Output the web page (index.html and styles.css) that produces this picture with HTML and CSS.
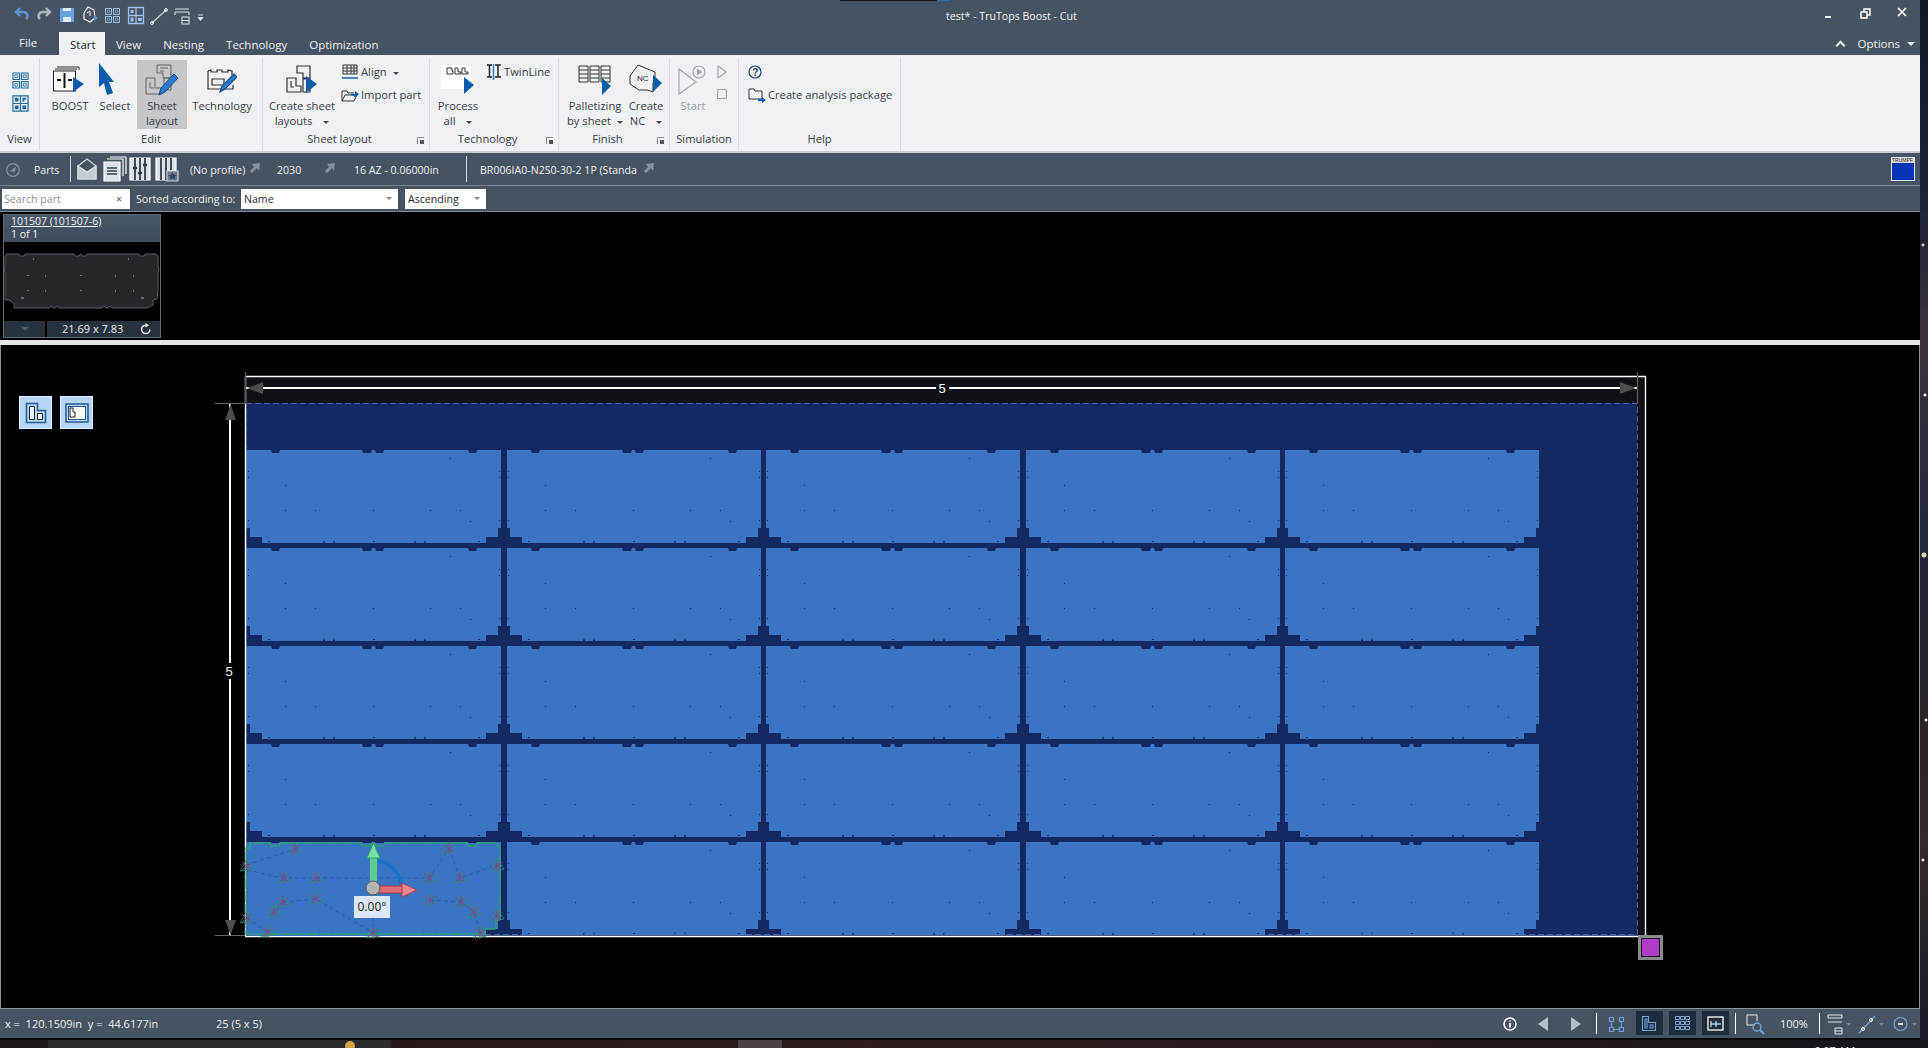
FILE: index.html
```html
<!DOCTYPE html>
<html lang="en">
<head>
  <meta charset="UTF-8">
  <title>test* - TruTops Boost - Cut</title>
  <link rel="stylesheet" href="styles.css">
</head>
<body>
  <svg width="0" height="0" class="defs">
    <defs>
      <g id="part">
        <path d="M0 0H24l1 3h7l1-3H115l1 3h8l1-3h3l1 3h7l1-3H221l1 3h7l1-3H254V78H251V87H239V93H179l-1-3-1 3h-8l-1-3-1 3H88l-1-3-1 3h-8l-1-3-1 3H15V87H3V78H0Z" fill="#3a75c4"/>
        <path d="M203 8h1v1h-1ZM1 21h1v1H1ZM1 27h1v1H1ZM252 21h1v1h-1ZM252 27h1v1h-1ZM38 35h1v1h-1ZM38 60h1v1h-1ZM68 60h1v1h-1ZM126 60h1v1h-1ZM183 60h1v1h-1ZM213 60h1v1h-1ZM223 71h1v1h-1ZM1 70h1v1H1ZM252 70h1v1h-1ZM21 91h2v1h-2ZM126 91h2v1h-2ZM231 91h2v1h-2Z" fill="#142861"/>
      </g>
      <g id="mark">
        <path d="M-5-4L5 4M5-4L-5 4M0-6V6" stroke="#824a78" stroke-width="1"/>
        <path d="M-7 5L0-7 7 3Z" stroke="#2b8f78" stroke-width=".8" fill="none"/>
      </g>
      <path id="ne" d="M0 8L2 10 7 5 9 8 10 0 2 1 4 4Z" fill="#8492a0"/>
    </defs>
  </svg>

  <div class="window">
    <header class="titlebar">
      <i class="sliver"></i>
      <div class="quick">
        <svg width="210" height="24" viewBox="0 0 210 24" fill="none">
          <path d="M17 9H23a4 4 0 0 1 3 7M20 5l-4 4 4 4" stroke="#5b93d3" stroke-width="2.400"/>
          <path d="M49 9H43a4 4 0 0 0-3 7M46 5l4 4-4 4" stroke="#aeb6c0" stroke-width="2.400"/>
          <path d="M60 5H74V19H60Z" fill="#68a2e6"/><rect x="63" y="14" width="8" height="5" fill="#dfe8f2"/><rect x="63" y="5" width="8" height="3" fill="#dfe8f2"/>
          <path d="M84 10l4-6 6 3 1 8-5 4-6-3Z" stroke="#fff" stroke-width="1.100"/><path d="M94 12l4 3-4 3Z" fill="#5b93d3"/><path d="M87 10l3-2v5" stroke="#fff"/>
          <path d="M105.500 5.500h6v6h-6ZM113.500 5.500h6v6h-6ZM105.500 13.500h6v6h-6ZM113.500 13.500h6v6h-6Z" stroke="#9fc2ea"/><path d="M107.500 7.500h2v2h-2ZM115.500 7.500h2v2h-2ZM107.500 15.500h2v2h-2ZM115.500 15.500h2v2h-2Z" stroke="#9fc2ea" stroke-width=".7"/>
          <path d="M128.500 4.500h15v16h-15ZM128.500 12.500h15M136 4.500v16" stroke="#9fc2ea" stroke-width="1.300"/><path d="M130.500 7h3v3h-3ZM138 15h4v3h-4ZM130.500 14.500h3v4h-3Z" fill="#9fc2ea"/>
          <path d="M152 20l14-13" stroke="#cfd6dd" stroke-width="1.100"/><circle cx="152" cy="20" r="1.400" stroke="#fff"/><circle cx="166" cy="7" r="1.400" stroke="#fff"/>
          <path d="M175 6h14M175 9h14M175 9v3M189 9v3M182 14h7v7h-7ZM182 17.500h7" stroke="#dfe4ea" stroke-width="1.100"/>
          <path d="M198 12h5M198 14.500h5l-2.500 3Z" fill="#e5e8ec" stroke="#e5e8ec" stroke-width=".8"/>
        </svg>
      </div>
      <div class="title">test* - TruTops Boost - Cut</div>
      <div class="winbtns">
        <svg width="90" height="20" viewBox="0 0 90 20" fill="none" stroke="#fff">
          <path d="M2 14h6" stroke-width="2"/>
          <path d="M38 9h6v6h-6ZM41 9V6h6v6h-3" stroke-width="1.500"/>
          <path d="M75 5l8 8M83 5l-8 8" stroke-width="1.700"/>
        </svg>
      </div>
    </header>

    <nav class="tabs">
      <span class="tab file">File</span>
      <span class="tab active">Start</span>
      <span class="tab">View</span>
      <span class="tab">Nesting</span>
      <span class="tab">Technology</span>
      <span class="tab">Optimization</span>
      <span class="spacer"></span>
      <i class="chevron"></i>
      <span class="options">Options <i class="caret-w"></i></span>
    </nav>

    <section class="ribbon">
      <div class="group g-view">
        <div class="group-body stacked-icons">
          <svg width="17" height="17" viewBox="0 0 18 18" fill="none" stroke="#1e6f9b" stroke-width="1.200"><path d="M1 1h7v7H1ZM10 1h7v7h-7ZM1 10h7v7H1ZM10 10h7v7h-7Z"/><path d="M3 3h3v3H3ZM12 3h3v3h-3ZM3 12h3v3H3ZM12 12h3v3h-3Z" stroke-width=".9"/></svg>
          <svg width="17" height="17" viewBox="0 0 18 18" fill="none" stroke="#1e6f9b" stroke-width="1.300"><path d="M1 1h16v16H1ZM1 9h16M9 1v16"/><path d="M3 3h4v4H3ZM11 11h4v4h-4ZM3 11h4v4H3Z" fill="#1e6f9b" stroke="none"/><path d="M11 3h4v2h-2v2h-2Z" fill="#1e6f9b" stroke="none"/></svg>
        </div>
        <div class="group-label">View</div>
      </div>

      <div class="group g-edit">
        <div class="group-body">
          <div class="big b-boost">
            <svg class="big-icon" width="34" height="28" viewBox="0 0 34 28" fill="none">
              <path d="M4 1h22v3M2 3h22" stroke="#333"/><rect x=".5" y="5" width="22" height="20" fill="#fff" stroke="#222"/>
              <path d="M4 14h4M15 14h4" stroke="#111" stroke-width="2"/><path d="M11.500 7v15" stroke="#111" stroke-width="2"/>
              <path d="M20 11l11 7-11 8Z" fill="#0b5cad"/>
            </svg>
            <span>BOOST</span>
          </div>
          <div class="big b-select">
            <svg class="big-icon" width="22" height="34" viewBox="0 0 22 34"><path d="M2 0L17 19 12 19 16 30 10 32 7 20 2 24Z" fill="#0b5cad"/></svg>
            <span>Select</span>
          </div>
          <div class="big b-sheet selected">
            <svg class="big-icon" width="34" height="32" viewBox="0 0 34 32" fill="none" stroke="#666">
              <path d="M12 1h14v13H18V9h-6ZM1 14h9v10h6v6H1ZM5 18v6h4M19 14h7v12h-7Z"/>
              <path d="M15 4h8M15 7h4" stroke-width="1.200"/>
              <path d="M14 31l2-7 13-14 4 4-13 14Z" fill="#2a7bd0" stroke="#174a7f"/>
            </svg>
            <span>Sheet<br>layout</span>
          </div>
          <div class="big b-tech">
            <svg class="big-icon" width="30" height="26" viewBox="0 0 30 26" fill="none" stroke="#333" stroke-width="1.200">
              <path d="M1 4l3-1v2h6V3h5v2h6V3l4 1v6M26 18v4H1V4"/>
              <path d="M5 12h12v6H5Z"/>
              <path d="M13 25l2-6 12-12 3 3-12 12Z" fill="#2a7bd0" stroke="#174a7f"/>
            </svg>
            <span>Technology</span>
          </div>
        </div>
        <div class="group-label">Edit</div>
      </div>

      <div class="group g-sheet">
        <div class="group-body">
          <div class="big b-create">
            <svg class="big-icon" width="32" height="30" viewBox="0 0 32 30" fill="none" stroke="#333" stroke-width="1.200">
              <path d="M11 1h13v12h-7V8h-6ZM1 13h9v8h5v6H1ZM5 16v6h3M17 14h7v13h-7Z"/>
              <path d="M20 11l11 8-11 9Z" fill="#0b5cad" stroke="none"/>
            </svg>
            <span>Create sheet<br>layouts <i class="caret"></i></span>
          </div>
          <div class="small-col">
            <div class="small-item">
              <svg width="18" height="16" viewBox="0 0 18 16" fill="none" stroke="#333"><path d="M2 1h14v9H2ZM2 4h14M2 7h14M6 1v9M10 1v9M13 1v9"/><path d="M1 14h16" stroke="#0b5cad" stroke-width="1.500"/></svg>
              <span>Align <i class="caret"></i></span>
            </div>
            <div class="small-item">
              <svg width="18" height="16" viewBox="0 0 18 16" fill="none" stroke="#333"><path d="M1 14V4h5l1 2h6M1 14l3-6h12l-3 6Z"/><path d="M9 7h5V4l4 3-4 3Z" fill="#0b5cad" stroke="none"/></svg>
              <span>Import part</span>
            </div>
          </div>
        </div>
        <div class="group-label has-launcher">Sheet layout<i class="launcher"></i></div>
      </div>

      <div class="group g-tech">
        <div class="group-body">
          <div class="big b-process">
            <svg class="big-icon" width="34" height="30" viewBox="0 0 34 30" fill="none">
              <rect width="30" height="24" fill="#fff"/>
              <path d="M6 3h5v3h1v3H6ZM14 3h3v4h3v2h-6ZM21 3h3v4h3v2h-6Z" stroke="#333"/>
              <path d="M23 12l10 8-10 9Z" fill="#0b5cad"/>
            </svg>
            <span>Process<br>all <i class="caret"></i></span>
          </div>
          <div class="small-col">
            <div class="small-item">
              <svg width="16" height="16" viewBox="0 0 16 16" fill="none" stroke="#222" stroke-width="1.500"><path d="M1 1h5M1 13h5M3.500 1v12M9 1h6M9 13h6M12 1v12"/><path d="M7.500 0v16" stroke="#2a7bd0"/></svg>
              <span>TwinLine</span>
            </div>
          </div>
        </div>
        <div class="group-label has-launcher">Technology<i class="launcher"></i></div>
      </div>

      <div class="group g-finish">
        <div class="group-body">
          <div class="big b-pallet">
            <svg class="big-icon" width="34" height="30" viewBox="0 0 34 30" fill="none" stroke="#333">
              <path d="M1 1h9v16H1ZM12 1h9v16h-9ZM23 1h9v16h-9ZM1 5h9M1 9h9M1 13h9M12 5h9M12 9h9M12 13h9M23 5h9M23 9h9M23 13h9"/>
              <path d="M24 13l9 8-9 9Z" fill="#0b5cad" stroke="none"/>
            </svg>
            <span>Palletizing<br>by sheet <i class="caret"></i></span>
          </div>
          <div class="big b-nc">
            <svg class="big-icon" width="34" height="32" viewBox="0 0 34 32" fill="none" stroke="#333">
              <path d="M9 1l17 7v8l-2 3v9l-6-2H10l-9-6v-8Z"/>
              <text x="8" y="17" class="nc-text">NC</text>
              <path d="M24 11l9 8-9 9Z" fill="#0b5cad" stroke="none"/>
            </svg>
            <span>Create<br>NC <i class="caret"></i></span>
          </div>
        </div>
        <div class="group-label has-launcher">Finish<i class="launcher"></i></div>
      </div>

      <div class="group g-sim">
        <div class="group-body">
          <div class="big b-start disabled">
            <svg class="big-icon" width="30" height="30" viewBox="0 0 30 30" fill="none" stroke="#a3a8ae" stroke-width="1.200">
              <path d="M1 4l17 13L1 29Z"/>
              <circle cx="21" cy="7" r="6"/><path d="M19.500 4.500l4 2.500-4 2.500Z" fill="#a3a8ae"/>
            </svg>
            <span>Start</span>
          </div>
          <div class="sim-col">
            <svg width="10" height="14" viewBox="0 0 10 14" fill="none" stroke="#a3a8ae" stroke-width="1.200"><path d="M1 1l8 6-8 6Z"/></svg>
            <svg width="10" height="10" viewBox="0 0 10 10" fill="none" stroke="#a3a8ae" stroke-width="1.200"><path d="M.5 .5h9v9h-9Z"/></svg>
          </div>
        </div>
        <div class="group-label">Simulation</div>
      </div>

      <div class="group g-help">
        <div class="group-body">
          <div class="small-col">
            <div class="small-item">
              <svg width="14" height="14" viewBox="0 0 14 14" fill="none" stroke="#1d3f63" stroke-width="1.200"><circle cx="7" cy="7" r="6"/><text x="4.200" y="10.500" class="help-q">?</text></svg>
            </div>
            <div class="small-item">
              <svg width="18" height="16" viewBox="0 0 18 16" fill="none" stroke="#333"><path d="M1 12V2h5l1 2h7v8Z"/><path d="M10 12h4v-2l4 3-4 3v-2h-4Z" fill="#0b5cad" stroke="none"/></svg>
              <span>Create analysis package</span>
            </div>
          </div>
        </div>
        <div class="group-label">Help</div>
      </div>
    </section>

    <div class="partsbar">
      <svg class="nav-circle" width="14" height="14" viewBox="0 0 14 14"><circle cx="7" cy="7" r="6.300" fill="none" stroke="#8592a0" stroke-width="1.200"/><path d="M10 3.500L3.500 8.500H8.500V11Z" fill="#8592a0"/></svg>
      <span class="pb-parts">Parts</span>
      <i class="pb-sep"></i>
      <svg class="pb-icons" width="104" height="26" viewBox="0 0 104 26" fill="none" stroke="#fff" stroke-width="1.200">
        <path d="M1 10l9-7 9 7v13H1Z" fill="#46535f" stroke="#d8dee4"/><path d="M1 10l9 6 9-6v13H1Z" fill="#c3ccd4" stroke="#d8dee4"/>
        <path d="M27 6h16v19H27Z" fill="#dbe1e7" stroke="#fff"/><path d="M30 3h16v17M33 1h16v17"/><path d="M30 12h10M30 15h10M30 18h10" stroke="#36444f" stroke-width="1.500"/>
        <path d="M53 2h20v22H53Z" fill="#dbe1e7"/><path d="M58 2v22M63 2v22M68 2v22" stroke="#2e3b48" stroke-width="1.800"/><path d="M56 12h4M61 17h4M66 9h4" stroke="#2e3b48" stroke-width="2.500"/>
        <path d="M79 2h20v22H79Z" fill="#dbe1e7"/><path d="M84 2v22M89 2v22M94 2v12" stroke="#2e3b48" stroke-width="1.800"/>
        <path d="M90 15h11v10H90Z" fill="#667a90" stroke="#c5ced6"/><path d="M95.500 16l1.500 3h3l-2.500 2 1 3-3-2-3 2 1-3-2.500-2h3Z" fill="#33465b" stroke="none"/>
      </svg>
      <span class="pb-text t-profile">(No profile)</span><svg class="ne a-profile" width="10" height="10" viewBox="0 0 10 10"><use href="#ne"/></svg>
      <span class="pb-text t-2030">2030</span><svg class="ne a-2030" width="10" height="10" viewBox="0 0 10 10"><use href="#ne"/></svg>
      <span class="pb-text t-16az">16 AZ - 0.06000in</span>
      <i class="pb-sep s2"></i>
      <span class="pb-text t-br">BR006IA0-N2S0-30-2 1P (Standa</span><svg class="ne a-br" width="10" height="10" viewBox="0 0 10 10"><use href="#ne"/></svg>
      <span class="spacer"></span>
      <div class="logo"><span>TRUMPF</span></div>
    </div>

    <div class="filterbar">
      <div class="search"><span>Search part</span><b>&times;</b></div>
      <label class="sorted">Sorted according to:</label>
      <div class="select s-name"><span>Name</span><i class="caret-g"></i></div>
      <div class="select s-order"><span>Ascending</span><i class="caret-g"></i></div>
    </div>

    <div class="parts-strip">
      <article class="part-card">
        <div class="part-head"><u>101507 (101507-6)</u><span>1 of 1</span></div>
        <div class="part-preview">
          <svg width="156" height="78" viewBox="0 0 156 78">
            <path d="M1 14L3 12H15l1 2h4l1-2H70l1 2h4l1-2h1l1 2h4l1-2H135l1 2h4l1-2H152L154 14V24L155 27 154 30V50L153 57 149 58V63L143 66H108l-2-2-2 2-2 0-2-2-2 2H55l-2-2-2 2-2 0-2-2-2 2H10V61L5 58H1V30L0 27 1 24Z" fill="#26272b" stroke="#5a5d62"/>
            <g fill="#696c71"><rect x="29" y="16" width="1" height="2"/><rect x="124" y="16" width="1" height="2"/><rect x="23" y="33" width="2" height="1"/><rect x="41" y="33" width="1" height="2"/><rect x="76" y="33" width="2" height="1"/><rect x="111" y="33" width="1" height="2"/><rect x="129" y="33" width="1" height="2"/><rect x="23" y="48" width="2" height="1"/><rect x="41" y="48" width="1" height="2"/><rect x="76" y="48" width="2" height="1"/><rect x="111" y="48" width="1" height="2"/><rect x="129" y="48" width="1" height="2"/><rect x="17" y="55" width="3" height="2"/><rect x="137" y="55" width="3" height="2"/></g>
          </svg>
        </div>
        <div class="part-foot">
          <div class="pf-left"><i class="caret-d"></i></div>
          <div class="pf-right"><span>21.69 x 7.83</span>
            <svg width="12" height="12" viewBox="0 0 12 12" fill="none" stroke="#e8eaec" stroke-width="1.500"><path d="M10 6.500A4.200 4.200 0 1 1 6.500 2.200"/><path d="M5.500 0v4.500L9 2.200Z" fill="#e8eaec" stroke="none"/></svg>
          </div>
        </div>
      </article>
    </div>

    <div class="splitter"></div>

    <main class="canvas">
      <svg class="drawing" width="1918" height="663" viewBox="0 345 1918 663" fill="none">
        <rect x="245" y="377" width="1400" height="27" fill="#101116"/>
        <rect x="1637" y="377" width="8" height="559" fill="#101116"/>
        <rect x="245" y="403" width="1392" height="533" fill="#142861"/>
        <path d="M246 403.500H1637.500V934.500H246Z" stroke="#3c64ad" stroke-dasharray="6 3"/>

        <use href="#part" x="247" y="450"/><use href="#part" x="507" y="450"/><use href="#part" x="766" y="450"/><use href="#part" x="1026" y="450"/><use href="#part" x="1285" y="450"/>
        <use href="#part" x="247" y="548"/><use href="#part" x="507" y="548"/><use href="#part" x="766" y="548"/><use href="#part" x="1026" y="548"/><use href="#part" x="1285" y="548"/>
        <use href="#part" x="247" y="646"/><use href="#part" x="507" y="646"/><use href="#part" x="766" y="646"/><use href="#part" x="1026" y="646"/><use href="#part" x="1285" y="646"/>
        <use href="#part" x="247" y="744"/><use href="#part" x="507" y="744"/><use href="#part" x="766" y="744"/><use href="#part" x="1026" y="744"/><use href="#part" x="1285" y="744"/>
        <use href="#part" x="247" y="842"/><use href="#part" x="507" y="842"/><use href="#part" x="766" y="842"/><use href="#part" x="1026" y="842"/><use href="#part" x="1285" y="842"/>
        <path d="M246 450h1v78h-1ZM246 548h1v78h-1ZM246 646h1v78h-1ZM246 744h1v78h-1Z" fill="#3a75c4"/>

        <path d="M245.500 936V376.500H1645.500V936.500H245" stroke="#fff" stroke-width="1.400"/>

        <!-- dimension lines -->
        <path d="M246 388H1637" stroke="#fff" stroke-width="2"/>
        <path d="M245.500 372V404M1637.500 372V404" stroke="#555" stroke-width="1.500"/>
        <path d="M247 388l16-6v12Z" fill="#4d4d4d"/><path d="M1636 388l-16-6v12Z" fill="#4d4d4d"/>
        <rect x="936" y="380" width="13" height="14" fill="#0f1015"/>
        <text x="942" y="393" class="dim" text-anchor="middle">5</text>
        <path d="M230 404V935" stroke="#fff" stroke-width="2"/>
        <path d="M215 403.500H245M215 935.500H245" stroke="#666" stroke-width="1.200"/>
        <path d="M230.500 404l-5.500 16h11Z" fill="#4d4d4d"/><path d="M230.500 935l-5.500-15h11Z" fill="#4d4d4d"/>
        <rect x="223" y="663" width="14" height="16" fill="#000"/>
        <text x="229" y="676" class="dim" text-anchor="middle">5</text>

        <!-- selected part -->
        <path d="M246 843H500V920H496V929H484V936H246Z" fill="#3a75c4"/>
        <path d="M246 848H250V843H270l1 3h8l1-3H362l1 3h8l1-3h3l1 3h8l1-3H467l1 3h8l1-3H496L500 848V920H496V929H484V934H246Z" stroke="#2ca274" stroke-width="1.400" stroke-dasharray="12 1"/>
        <path d="M247 865L295 849M247 870L283 878H429L449 849 460 878 497 865M283 902L274 912M283 902L316 899 373 933V915M430 900L461 902 474 912 480 933M247 918L268 932" stroke="#2b58ad" stroke-width=".9" stroke-dasharray="4 3"/>
        <use href="#mark" x="295" y="849"/><use href="#mark" x="247" y="866"/><use href="#mark" x="284" y="878"/><use href="#mark" x="316" y="878"/><use href="#mark" x="429" y="878"/><use href="#mark" x="460" y="878"/><use href="#mark" x="449" y="849"/><use href="#mark" x="497" y="866"/><use href="#mark" x="283" y="902"/><use href="#mark" x="316" y="899"/><use href="#mark" x="430" y="900"/><use href="#mark" x="461" y="902"/><use href="#mark" x="474" y="912"/><use href="#mark" x="274" y="912"/><use href="#mark" x="247" y="918"/><use href="#mark" x="268" y="932"/><use href="#mark" x="373" y="933"/><use href="#mark" x="480" y="933"/><use href="#mark" x="497" y="916"/>

        <!-- rotate and move handles -->
        <path d="M378 861A27 27 0 0 1 401 884" stroke="#1b72c8" stroke-width="4"/>
        <rect x="370" y="856" width="7" height="26" fill="#5cd08a"/>
        <path d="M373.500 843L380 858H367Z" fill="#7be0a8" stroke="#2ea563"/>
        <rect x="378" y="886" width="25" height="7" fill="#e06e78" stroke="#a33a44"/>
        <path d="M402 883L417 890 402 897Z" fill="#f08a90" stroke="#b03a48"/>
        <circle cx="373" cy="888" r="7" fill="#b4b4b2" stroke="#555"/>
      </svg>

      <div class="gizmo-label">0.00&deg;</div>
      <div class="view-tools">
        <button class="tool">
          <svg width="22" height="22" viewBox="0 0 22 22" fill="none" stroke="#235a91"><path d="M1.500 1.500h11v7h8v12h-19Z" stroke-width="1.500"/><path d="M4.500 4.500h5v13h-5ZM12.500 11.500h5v6h-5Z" fill="#eaf2fb" stroke="#222"/></svg>
        </button>
        <button class="tool">
          <svg width="24" height="20" viewBox="0 0 24 20" fill="none" stroke="#235a91"><rect x="1" y="1" width="22" height="18" stroke-width="1.500"/><rect x="3.500" y="3.500" width="17" height="13" fill="#fff"/><path d="M5 5h3v4h2v5H5Z" stroke="#222"/></svg>
        </button>
      </div>
      <div class="purple-handle"></div>
    </main>

    <footer class="statusbar">
      <span class="coord">x = &nbsp;120.1509in &nbsp;y = &nbsp;44.6177in</span>
      <span class="count">25 (5 x 5)</span>
      <span class="spacer"></span>
      <svg class="st-icons" width="427" height="27" viewBox="1493 2 427 27" fill="none">
        <circle cx="1510" cy="16" r="6" stroke="#fff" stroke-width="1.500"/><path d="M1510 12.500v1M1510 15v4.500" stroke="#fff" stroke-width="1.800"/>
        <path d="M1548 9v14l-10-7Z" fill="#b6bec7"/><path d="M1571 9v14l10-7Z" fill="#b6bec7"/>
        <path d="M1596.500 5v21" stroke="#fff"/>
        <path d="M1609.500 9.500h4v4h-4ZM1619.500 9.500h4v4h-4ZM1609.500 19.500h4v4h-4ZM1619.500 19.500h4v4h-4ZM1611.500 13.500v6M1621.500 13.500v6M1613.500 21.500h6" stroke="#6ea2db" stroke-width="1.100"/>
        <rect x="1636" y="3" width="27" height="24" fill="#1e2c3b"/><path d="M1642.500 8.500h6v6h7v8h-13ZM1645 11v9h2v-9ZM1650 17h3v3h-3Z" stroke="#6ea2db" stroke-width="1.100"/>
        <rect x="1669" y="3" width="27" height="24" fill="#1e2c3b"/>
        <path d="M1675.500 8.500h4v3h-4ZM1680.500 8.500h4v3h-4ZM1685.500 8.500h4v3h-4ZM1675.500 13.500h4v3h-4ZM1680.500 13.500h4v3h-4ZM1685.500 13.500h4v3h-4ZM1675.500 18.500h4v3h-4ZM1680.500 18.500h4v3h-4ZM1685.500 18.500h4v3h-4Z" stroke="#85afe0" stroke-width=".9"/>
        <rect x="1702" y="3" width="27" height="24" fill="#1e2c3b"/><rect x="1708" y="9" width="15" height="13" stroke="#fff" stroke-width="1.300"/><path d="M1711 16h10" stroke="#6ea2db" stroke-width="2"/><path d="M1711 13v6M1716 13v6" stroke="#fff"/>
        <path d="M1735.500 5v21" stroke="#fff"/>
        <path d="M1755 17h-8V7h10v6" stroke="#dfe4ea" stroke-width="1.100"/><circle cx="1757" cy="19" r="4" stroke="#75a8e0" stroke-width="1.300"/><path d="M1760 22l4 4" stroke="#75a8e0" stroke-width="1.800"/>
        <text x="1780" y="20" class="pct">100%</text>
        <path d="M1819.500 5v21" stroke="#fff"/>
        <path d="M1828 7h14M1828 10h14M1828 7v3M1842 7v3M1828 14h14M1835 20h7v6h-7ZM1835 23h7" stroke="#e5e8ec" stroke-width="1"/><path d="M1846 15h5l-2.500 3Z" fill="#77838f"/>
        <path d="M1859 25l16-17" stroke="#7ea9da" stroke-width="1.200"/><circle cx="1863" cy="21" r="1.500" stroke="#fff"/><circle cx="1871" cy="12" r="1.500" stroke="#fff"/><path d="M1879 15h5l-2.500 3Z" fill="#77838f"/>
        <circle cx="1900.500" cy="16" r="6.500" stroke="#7ea9da" stroke-width="1.100"/><path d="M1898 16h5" stroke="#fff" stroke-width="1.500"/><path d="M1912 15h5l-2.500 3Z" fill="#77838f"/>
      </svg>
    </footer>
  </div>

  <div class="taskstrip">
    <div class="task-window"><i class="task-dot"></i></div>
    <i class="task-tile"></i>
    <span class="task-clock">6:07 AM</span>
  </div>
</body>
</html>
```

FILE: styles.css
```css
* {
  box-sizing: border-box;
}
html,
body {
  margin: 0;
  padding: 0;
  height: 100%;
  overflow: hidden;
}
body {
  font-family: "Open Sans", "Noto Sans", sans-serif;
  font-size: 11.2px;
  color: #262b31;
  width: 1928px;
  height: 1048px;
  position: relative;
  background:
    radial-gradient(circle at 1923px 245px, #c9c3b0 0 1px, transparent 2px),
    radial-gradient(circle at 1925px 395px, #e8e4d8 0 1px, transparent 2px),
    radial-gradient(circle at 1924px 555px, #f0d9a0 0 2px, transparent 3px),
    radial-gradient(circle at 1926px 720px, #d8d8d8 0 1px, transparent 2px),
    radial-gradient(circle at 1923px 860px, #d8d8d8 0 1px, transparent 2px),
    linear-gradient(180deg, #131826 0%, #1e2438 20%, #3b3038 32%, #22283c 50%, #2a2226 70%, #34292a 80%, #161a28 100%);
}
.defs {
  position: absolute;
}
.spacer {
  flex: 1;
}

.window {
  width: 1920px;
  height: 1040px;
  display: flex;
  flex-direction: column;
  background: #465362;
  border-bottom: 2px solid #08090b;
}
.window > * {
  flex-shrink: 0;
}

/* title bar */
.titlebar {
  height: 32px;
  display: flex;
  align-items: center;
  position: relative;
  background: #465362;
}
.sliver {
  position: absolute;
  left: 840px;
  top: 0;
  width: 110px;
  height: 1px;
  background: linear-gradient(90deg, #14181d 88%, #1d6fc0 88%);
}
.quick {
  width: 210px;
  height: 24px;
  margin-top: -3px;
}
.title {
  position: absolute;
  left: 946px;
  top: 9px;
  color: #f3f4f6;
  font-size: 10.6px;
  white-space: nowrap;
}
.winbtns {
  position: absolute;
  right: 7px;
  top: 3px;
  width: 90px;
}

/* tabs */
.tabs {
  height: 23px;
  display: flex;
  align-items: flex-end;
  background: #465362;
  color: #eef0f2;
  font-size: 11.5px;
}
.tab {
  height: 23px;
  line-height: 25px;
  padding: 0 11px;
}
.tab.file {
  width: 59px;
  padding: 0 0 0 19px;
  line-height: 22px;
}
.tab.active {
  background: #f0f1f5;
  color: #22272c;
  width: 46px;
}
.chevron {
  width: 7px;
  height: 7px;
  margin: 0 14px 6px 0;
  border-top: 2px solid #e8ebee;
  border-left: 2px solid #e8ebee;
  transform: rotate(45deg);
}
.options {
  line-height: 23px;
  padding-right: 5px;
  display: flex;
  align-items: center;
  gap: 7px;
}
.caret-w {
  width: 0;
  height: 0;
  border: 4px solid transparent;
  border-top-color: #e8ebee;
  border-bottom: 0;
}

/* ribbon */
.ribbon {
  height: 98px;
  background: #f0f1f5;
  display: flex;
  border-bottom: 2px solid #c9ced3;
  padding-top: 3px;
}
.group {
  display: flex;
  flex-direction: column;
  border-right: 1px solid #d8dbdf;
  height: 92px;
  flex-shrink: 0;
}
.g-view { width: 40px; }
.g-edit { width: 223px; }
.g-sheet { width: 167px; }
.g-tech { width: 129px; }
.g-finish { width: 111px; }
.g-sim { width: 69px; }
.g-help { width: 162px; }
.group-body {
  height: 71px;
  display: flex;
  padding-top: 2px;
}
.group-label {
  height: 21px;
  line-height: 19px;
  text-align: center;
  color: #3a4047;
  position: relative;
}
.has-launcher {
  padding-right: 13px;
}
.launcher {
  position: absolute;
  right: 5px;
  top: 8px;
  width: 7px;
  height: 7px;
  border-top: 1px solid #8a8f95;
  border-left: 1px solid #8a8f95;
}
.launcher::after {
  content: "";
  position: absolute;
  right: 0;
  bottom: 0;
  width: 4px;
  height: 4px;
  background: #555;
}
.stacked-icons {
  flex-direction: column;
  align-items: center;
  gap: 6px;
  padding: 14px 0 0 2px;
}
.big {
  display: flex;
  flex-direction: column;
  align-items: center;
  text-align: center;
  line-height: 15px;
  color: #3a4047;
  height: 69px;
  flex-shrink: 0;
}
.big-icon {
  flex-shrink: 0;
  height: 34px;
  margin: 3px 0 1px;
}
.big.selected {
  background: #c4c6c9;
}
.big.disabled {
  color: #9a9fa6;
}
.b-boost { width: 52px; margin-left: 4px; }
.b-select { width: 36px; margin-left: 1px; }
.b-select .big-icon { margin-right: 14px; }
.b-sheet { width: 50px; margin-left: 4px; }
.b-tech { width: 70px; }
.b-create { width: 78px; }
.b-process { width: 56px; }
.b-pallet { width: 62px; margin-left: 5px; }
.b-nc { width: 40px; }
.b-start { width: 46px; }
.small-col {
  display: flex;
  flex-direction: column;
  gap: 6px;
  padding-top: 3px;
}
.small-item {
  display: flex;
  align-items: center;
  gap: 2px;
  height: 17px;
  color: #3a4047;
  white-space: nowrap;
}
.g-help .small-col {
  padding-left: 9px;
}
.sim-col {
  display: flex;
  flex-direction: column;
  gap: 10px;
  padding: 5px 0 0 1px;
}
.nc-text {
  font-family: "Liberation Sans", sans-serif;
  font-size: 8px;
  fill: #222;
  stroke: none;
}
.help-q {
  font-family: "Liberation Sans", sans-serif;
  font-size: 10px;
  font-weight: 700;
  fill: #1d3f63;
  stroke: none;
}
.caret {
  display: inline-block;
  width: 0;
  height: 0;
  border: 3px solid transparent;
  border-top-color: #444;
  border-bottom: 0;
  margin-left: 3px;
  vertical-align: middle;
}
.b-create .caret,
.b-process .caret,
.b-nc .caret {
  margin-left: 8px;
}

/* parts bar */
.partsbar {
  height: 33px;
  background: #465362;
  border-bottom: 1px solid #7f8a95;
  display: flex;
  align-items: center;
  color: #eef0f2;
  font-size: 10.6px;
  white-space: nowrap;
  padding-top: 2px;
}
.nav-circle {
  margin-left: 6px;
}
.pb-parts {
  margin-left: 14px;
  width: 36px;
}
.pb-sep {
  width: 1px;
  height: 26px;
  background: #d0d5da;
  margin-top: -2px;
}
.s2 {
  margin-left: 28px;
  margin-right: 13px;
}
.pb-icons {
  margin-left: 6px;
  margin-top: -2px;
}
.t-profile { margin-left: 9px; width: 54px; }
.t-2030 { margin-left: 17px; width: 24px; }
.t-16az { margin-left: 19px; width: 84px; }
.t-br { width: 159px; }
.ne {
  margin-top: -4px;
}
.a-profile { margin-left: 6px; }
.a-2030 { margin-left: 24px; }
.a-br { margin-left: 5px; }
.logo {
  width: 24px;
  height: 24px;
  margin: -2px 5px 0 0;
  border: 1px solid #dfe6ef;
  background: #0a34b5;
}
.logo span {
  display: block;
  height: 5px;
  background: #d8dadd;
  color: #222;
  font-size: 5px;
  line-height: 5px;
  overflow: hidden;
  font-family: "Liberation Sans", sans-serif;
}

/* filter row */
.filterbar {
  height: 26px;
  background: #465362;
  display: flex;
  align-items: center;
  font-size: 10.6px;
  color: #eef0f2;
  border-bottom: 1px solid #7f8a95;
  padding: 1px 0 0 2px;
}
.search {
  width: 128px;
  height: 20px;
  background: #fff;
  color: #8a8f95;
  display: flex;
  justify-content: space-between;
  align-items: center;
  padding: 0 8px 1px 2px;
}
.search b {
  color: #555;
  font-weight: 400;
}
.sorted {
  margin-left: 6px;
  width: 105px;
  padding-bottom: 1px;
  white-space: nowrap;
}
.select {
  height: 20px;
  background: #fff;
  color: #22272c;
  display: flex;
  justify-content: space-between;
  align-items: center;
  padding: 0 6px 1px 3px;
}
.s-name {
  width: 157px;
}
.s-order {
  width: 81px;
  margin-left: 7px;
}
.caret-g {
  width: 0;
  height: 0;
  border: 3px solid transparent;
  border-top-color: #888;
  border-bottom: 0;
}

/* parts strip */
.parts-strip {
  height: 128px;
  background: #000;
  padding: 2px 3px;
}
.part-card {
  width: 158px;
  height: 124px;
  border: 1px solid #5c6873;
  display: flex;
  flex-direction: column;
  background: #000;
}
.part-head {
  height: 27px;
  flex-shrink: 0;
  background: linear-gradient(180deg, #46586a, #3f4d5b);
  color: #f2f3f5;
  font-size: 10.5px;
  line-height: 13px;
  padding: 0 7px;
  display: flex;
  flex-direction: column;
}
.part-preview {
  flex: 1;
  overflow: hidden;
}
.part-foot {
  height: 16px;
  flex-shrink: 0;
  display: flex;
  gap: 2px;
}
.pf-left {
  width: 41px;
  background: #26323e;
  display: flex;
  align-items: center;
  justify-content: center;
}
.caret-d {
  width: 0;
  height: 0;
  border: 4px solid transparent;
  border-top-color: #4e5e6d;
  border-bottom: 0;
}
.pf-right {
  flex: 1;
  background: #26323e;
  color: #eef0f2;
  font-size: 11px;
  display: flex;
  justify-content: space-between;
  align-items: center;
  padding: 0 8px 1px 15px;
}

.splitter {
  height: 5px;
  background: #e4e5e6;
}

/* canvas */
.canvas {
  position: relative;
  height: 663px;
  background: #000;
  border-left: 1px solid #8b939b;
  border-right: 1px solid #8b939b;
  overflow: hidden;
}
.drawing {
  position: absolute;
  left: -1px;
  top: 0;
}
.dim {
  font-family: "Liberation Sans", sans-serif;
  font-size: 13px;
  fill: #fff;
}
.pct {
  font-family: "Open Sans", "Noto Sans", sans-serif;
  font-size: 11px;
  fill: #eef0f2;
}
.gizmo-label {
  position: absolute;
  left: 353px;
  top: 551px;
  width: 36px;
  height: 22px;
  background: #dce7f5;
  color: #1b1d20;
  font-size: 12px;
  line-height: 22px;
  text-align: center;
}
.view-tools {
  position: absolute;
  left: 18px;
  top: 51px;
  display: flex;
  gap: 8px;
}
.tool {
  width: 33px;
  height: 33px;
  padding: 0;
  border: 1px solid #e2effc;
  background: #b7d6f7;
  display: flex;
  align-items: center;
  justify-content: center;
}
.purple-handle {
  position: absolute;
  left: 1637px;
  top: 590px;
  width: 25px;
  height: 25px;
  background: #b03bc8;
  border: 3px solid #8a8a8a;
  box-shadow: inset 0 0 0 1px #14101a;
}

/* status bar */
.statusbar {
  flex: 1 1 0;
  min-height: 0;
  background: #465362;
  border-top: 1px solid #8b939b;
  display: flex;
  align-items: center;
  color: #eef0f2;
  font-size: 11px;
  padding-left: 5px;
}
.coord {
  width: 211px;
}
.count {
  width: 80px;
}

/* what shows of the desktop below the window */
.taskstrip {
  height: 8px;
  position: relative;
  overflow: hidden;
  background: linear-gradient(90deg, #1d1719 0, #2b1a1a 25%, #301e1e 45%, #2a1a1c 70%, #15171d 100%);
}
.task-window {
  position: absolute;
  left: 48px;
  width: 343px;
  height: 8px;
  background: #2b2a2c;
}
.task-dot {
  position: absolute;
  left: 297px;
  top: 1px;
  width: 10px;
  height: 10px;
  border-radius: 50%;
  background: #d3a44a;
}
.task-tile {
  position: absolute;
  left: 738px;
  width: 44px;
  height: 8px;
  background: #4a4342;
}
.task-clock {
  position: absolute;
  left: 1814px;
  top: 4px;
  color: #e4e4e4;
  font-size: 11px;
  line-height: 14px;
}
```
